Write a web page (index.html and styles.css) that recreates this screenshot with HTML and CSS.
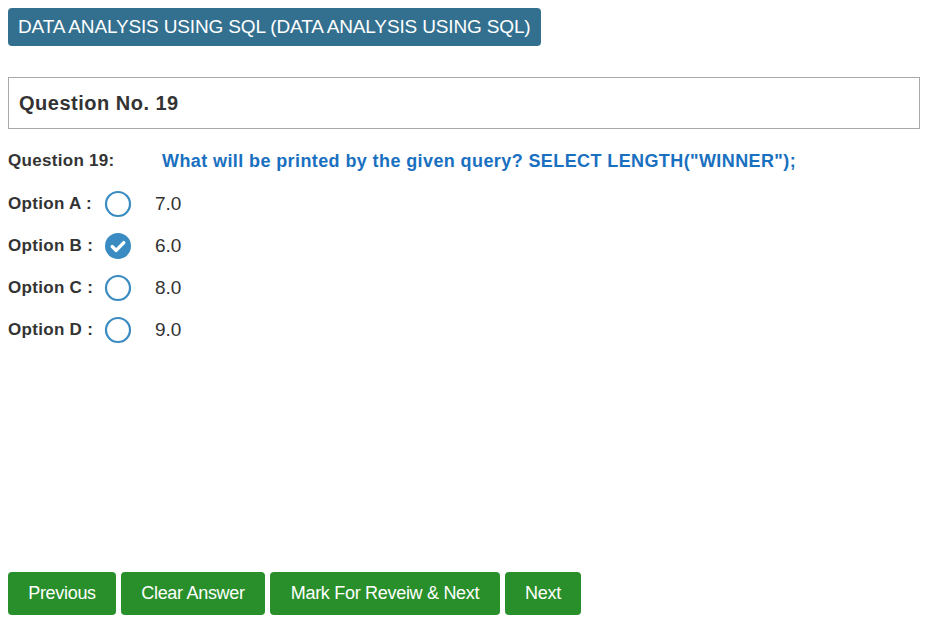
FILE: index.html
```html
<!DOCTYPE html>
<html>
<head>
<meta charset="utf-8">
<link rel="stylesheet" href="styles.css">
</head>
<body>
<div class="page">
  <div class="header-row"><span class="subject">DATA ANALYSIS USING SQL (DATA ANALYSIS USING SQL)</span></div>
  <div class="qbox">Question No. 19</div>
  <div class="qrow">
    <span class="qlabel">Question 19:</span>
    <span class="qtext">What will be printed by the given query? SELECT LENGTH("WINNER");</span>
  </div>
  <div class="options">
    <div class="opt">
      <span class="olabel">Option A :</span>
      <span class="radio"><svg width="28" height="28" viewBox="0 0 28 28"><circle cx="14" cy="14" r="12" fill="none" stroke="#3a8bc1" stroke-width="2.2"/></svg></span>
      <span class="oval">7.0</span>
    </div>
    <div class="opt">
      <span class="olabel">Option B :</span>
      <span class="radio"><svg width="28" height="28" viewBox="0 0 28 28"><circle cx="14" cy="14" r="13" fill="#3a8bc1"/><path d="M8.2 14.6 L12.2 18.4 L19.8 10.6" fill="none" stroke="#fff" stroke-width="3.4" stroke-linecap="round" stroke-linejoin="round"/></svg></span>
      <span class="oval">6.0</span>
    </div>
    <div class="opt">
      <span class="olabel">Option C :</span>
      <span class="radio"><svg width="28" height="28" viewBox="0 0 28 28"><circle cx="14" cy="14" r="12" fill="none" stroke="#3a8bc1" stroke-width="2.2"/></svg></span>
      <span class="oval">8.0</span>
    </div>
    <div class="opt">
      <span class="olabel">Option D :</span>
      <span class="radio"><svg width="28" height="28" viewBox="0 0 28 28"><circle cx="14" cy="14" r="12" fill="none" stroke="#3a8bc1" stroke-width="2.2"/></svg></span>
      <span class="oval">9.0</span>
    </div>
  </div>
  <div class="actions">
    <button class="btn btn-prev">Previous</button>
    <button class="btn btn-clear">Clear Answer</button>
    <button class="btn btn-mark">Mark For Reveiw &amp; Next</button>
    <button class="btn btn-next">Next</button>
  </div>
</div>
</body>
</html>
```
FILE: styles.css
```css
html, body {
  margin: 0;
  padding: 0;
  background: #fff;
}
body {
  font-family: "Liberation Sans", Arial, sans-serif;
  color: #333;
}
.page {
  padding: 8px;
  height: 629px;
  box-sizing: border-box;
  display: flex;
  flex-direction: column;
}
.header-row {
  display: flex;
}
.subject {
  background: #33708f;
  color: #fff;
  font-size: 19px;
  letter-spacing: -0.15px;
  height: 38px;
  line-height: 38px;
  padding: 0 10px;
  border-radius: 4px;
  box-sizing: border-box;
}
.qbox {
  margin-top: 31px;
  border: 1px solid #a9a9a9;
  height: 52px;
  box-sizing: border-box;
  padding: 0 10px;
  display: flex;
  align-items: center;
  font-weight: bold;
  font-size: 20px;
  letter-spacing: 0.5px;
  color: #333;
}
.qrow {
  margin-top: 21px;
  display: flex;
  align-items: center;
  height: 22px;
}
.qlabel {
  font-weight: bold;
  font-size: 17px;
  letter-spacing: 0.3px;
  width: 154px;
  color: #333;
}
.qtext {
  color: #1a70c0;
  font-weight: bold;
  font-size: 18px;
  letter-spacing: 0.4px;
}
.options {
  display: flex;
  flex-direction: column;
  gap: 14px;
  margin-top: 18px;
}
.opt {
  display: flex;
  align-items: center;
  height: 28px;
}
.olabel {
  font-weight: bold;
  font-size: 17px;
  letter-spacing: 0.3px;
  width: 96px;
}
.radio {
  display: flex;
  width: 28px;
  height: 28px;
}
.oval {
  margin-left: 23px;
  font-size: 19px;
  color: #333;
}
.actions {
  margin-top: auto;
  margin-bottom: 6px;
  display: flex;
  gap: 5px;
}
.btn {
  background: #298f2b;
  color: #fff;
  border: none;
  border-radius: 4px;
  height: 43px;
  font-family: "Liberation Sans", Arial, sans-serif;
  font-size: 18px;
  letter-spacing: -0.3px;
  padding: 0;
}
.btn-prev { width: 108px; }
.btn-clear { width: 144px; }
.btn-mark { width: 230px; }
.btn-next { width: 76px; }
```
